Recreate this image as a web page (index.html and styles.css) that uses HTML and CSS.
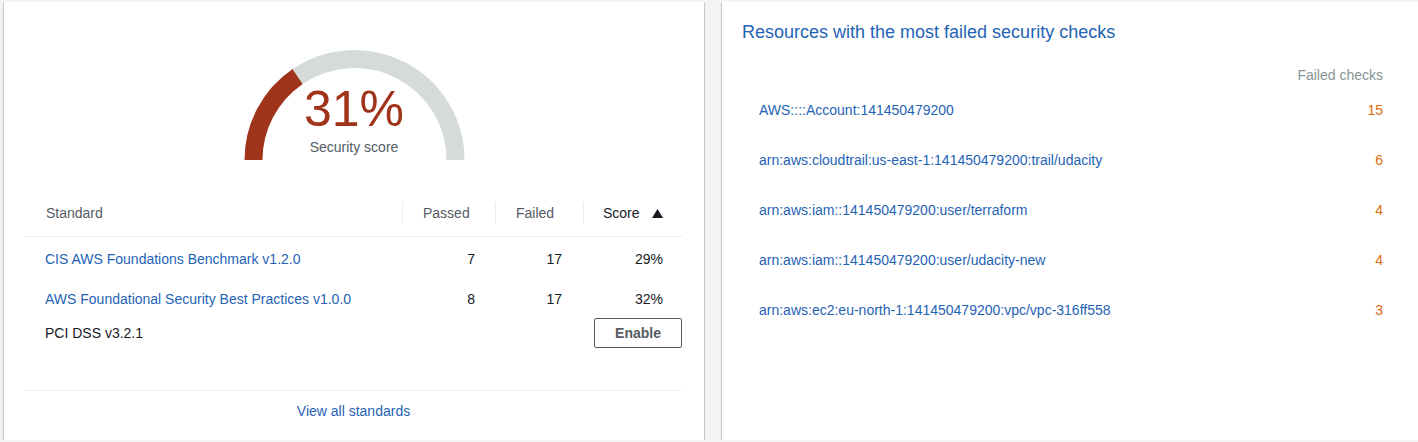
FILE: index.html
```html
<!DOCTYPE html>
<html lang="en">
<head>
<meta charset="utf-8">
<title>Security Hub summary</title>
<link rel="stylesheet" href="styles.css">
</head>
<body>
<div class="page">
  <section class="card card-score">
    <div class="gauge">
      <svg class="gauge-svg" width="221" height="110" viewBox="0 0 221 110">
        <path d="M9.5 110 A101 101 0 0 1 53.73 26.46" fill="none" stroke="#a0341b" stroke-width="18"/>
        <path d="M53.73 26.46 A101 101 0 0 1 211.5 110" fill="none" stroke="#d5dbdb" stroke-width="18"/>
      </svg>
      <div class="gauge-text">
        <div class="gauge-value">31%</div>
        <div class="gauge-label">Security score</div>
      </div>
    </div>

    <div class="std-table">
      <div class="std-head">
        <div class="th">Standard</div>
        <div class="th th-div">Passed</div>
        <div class="th th-div">Failed</div>
        <div class="th th-div th-sorted">Score
          <svg class="sort-icon" width="11" height="9" viewBox="0 0 11 9"><path d="M5.5 0 L11 9 L0 9 Z" fill="#16191f"/></svg>
        </div>
      </div>
      <div class="std-row">
        <a class="td link" href="#">CIS AWS Foundations Benchmark v1.2.0</a>
        <div class="td num">7</div>
        <div class="td num">17</div>
        <div class="td num">29%</div>
      </div>
      <div class="std-row">
        <a class="td link" href="#">AWS Foundational Security Best Practices v1.0.0</a>
        <div class="td num">8</div>
        <div class="td num">17</div>
        <div class="td num">32%</div>
      </div>
      <div class="std-row std-row-last">
        <div class="td plain">PCI DSS v3.2.1</div>
        <div class="td"></div>
        <div class="td"></div>
        <div class="td td-btn"><button class="btn">Enable</button></div>
      </div>
    </div>

    <div class="card-footer">
      <a class="link" href="#">View all standards</a>
    </div>
  </section>

  <section class="card card-resources">
    <h2 class="res-title">Resources with the most failed security checks</h2>
    <div class="res-list">
      <div class="res-head">Failed checks</div>
      <div class="res-row"><a class="link" href="#">AWS::::Account:141450479200</a><span class="res-count">15</span></div>
      <div class="res-row"><a class="link" href="#">arn:aws:cloudtrail:us-east-1:141450479200:trail/udacity</a><span class="res-count">6</span></div>
      <div class="res-row"><a class="link" href="#">arn:aws:iam::141450479200:user/terraform</a><span class="res-count">4</span></div>
      <div class="res-row"><a class="link" href="#">arn:aws:iam::141450479200:user/udacity-new</a><span class="res-count">4</span></div>
      <div class="res-row"><a class="link" href="#">arn:aws:ec2:eu-north-1:141450479200:vpc/vpc-316ff558</a><span class="res-count">3</span></div>
    </div>
  </section>
</div>
</body>
</html>
```

FILE: styles.css
```css
* { box-sizing: border-box; }

html, body {
  margin: 0;
  padding: 0;
  background: #f2f3f3;
  overflow: hidden;
}

body {
  font-family: "Liberation Sans", Arial, sans-serif;
  font-size: 14px;
  color: #16191f;
}

.page {
  display: flex;
  gap: 18px;
  padding: 2px 0 0 4px;
  width: 1440px;
}

.card {
  flex: 0 0 700px;
  height: 438px;
  background: #fff;
  box-shadow: 0 1px 1px 0 rgba(0, 28, 36, 0.3),
              1px 1px 1px 0 rgba(0, 28, 36, 0.15),
              -1px 1px 1px 0 rgba(0, 28, 36, 0.15);
}

.link {
  color: #1f63b5;
  text-decoration: none;
}

/* ---------- score card ---------- */
.card-score {
  display: flex;
  flex-direction: column;
}

.gauge {
  position: relative;
  align-self: center;
  width: 221px;
  height: 110px;
  margin-top: 48px;
}

.gauge-svg { display: block; }

.gauge-text {
  position: absolute;
  left: 0;
  right: 0;
  top: 34px;
  text-align: center;
}

.gauge-value {
  font-size: 50px;
  line-height: 50px;
  color: #a0341b;
}

.gauge-label {
  margin-top: 5px;
  font-size: 14px;
  line-height: 16px;
  color: #545b64;
}

.std-table {
  margin: 30px 22px 0 21px;
}

.std-head,
.std-row {
  display: grid;
  grid-template-columns: 377px 93px 88px 99px;
}

.std-head {
  height: 47px;
  border-bottom: 1px solid #eaeded;
}

.th {
  position: relative;
  display: flex;
  align-items: center;
  padding-left: 21px;
  color: #545b64;
  line-height: 16px;
}

.th-div::before {
  content: "";
  position: absolute;
  left: 0;
  top: 12px;
  height: 22px;
  border-left: 1px solid #eaeded;
}

.th-sorted {
  padding-left: 20px;
  color: #16191f;
}

.sort-icon {
  margin-left: 12px;
}

.std-row {
  height: 40px;
  align-items: center;
}

.std-head + .std-row { margin-top: 2px; }

.std-row-last {
  height: 30px;
  margin-top: -1px;
}

.td {
  padding: 0 20px;
  line-height: 16px;
  white-space: nowrap;
}

.num { text-align: right; }

.std-row .num:nth-child(2) { padding-right: 20px; }
.std-row .num:nth-child(3) { padding-right: 21px; }
.std-row .num:nth-child(4) { padding-right: 19px; }

.plain { color: #16191f; }

.td-btn {
  display: flex;
  justify-content: flex-end;
  padding: 0;
}

.btn {
  width: 88px;
  height: 30px;
  border: 1px solid #545b64;
  border-radius: 2px;
  background: #fff;
  color: #545b64;
  font-family: "Liberation Sans", Arial, sans-serif;
  font-size: 14px;
  font-weight: 700;
  padding: 0;
}

.card-footer {
  margin: auto 22px 9px 21px;
  height: 41px;
  border-top: 1px solid #eaeded;
  display: flex;
  align-items: center;
  justify-content: center;
}

/* ---------- resources card ---------- */
.card-resources {
  padding: 19px 39px 0 20px;
}

.res-title {
  margin: 0;
  font-size: 18px;
  line-height: 22px;
  font-weight: 400;
  color: #1f63b5;
}

.res-list {
  margin-top: 22px;
  padding-left: 17px;
}

.res-head {
  height: 20px;
  line-height: 20px;
  text-align: right;
  color: #879596;
}

.res-row {
  height: 50px;
  display: flex;
  align-items: center;
  justify-content: space-between;
  line-height: 16px;
}

.res-count {
  color: #dd6b10;
}
```
